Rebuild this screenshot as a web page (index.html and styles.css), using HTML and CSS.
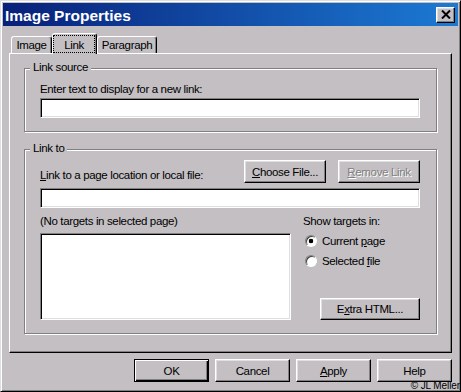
FILE: index.html
```html
<!DOCTYPE html>
<html lang="en">
<head>
    <meta charset="UTF-8">
    <meta name="viewport" content="width=device-width, initial-scale=1.0">
    <title>Image Properties</title>
    <link rel="stylesheet" href="styles.css">
</head>
<body>

<div class="window">
    <div class="titlebar">
        <span class="title">Image Properties</span>
        <button class="close-btn" aria-label="Close">
            <svg width="10" height="9" viewBox="0 0 10 9">
                <path d="M1 0.5 L9 8.5 M9 0.5 L1 8.5" stroke="#000" stroke-width="2" fill="none"/>
            </svg>
        </button>
    </div>

    <div class="content">
        <div class="tabs">
            <div class="tab tab-image">Image</div>
            <div class="tab tab-link active"><span class="focus">Link</span></div>
            <div class="tab tab-para">Paragraph</div>
        </div>

        <div class="panel">
            <div class="group group-source">
                <span class="group-title">Link source</span>
                <div class="label">Enter text to display for a new link:</div>
                <div class="textbox"></div>
            </div>

            <div class="group group-link">
                <span class="group-title">Link to</span>
                <div class="file-row">
                    <div class="label file-label"><u>L</u>ink to a page location or local file:</div>
                    <button class="btn btn-file"><u>C</u>hoose File...</button>
                    <button class="btn btn-file disabled"><u>R</u>emove Link</button>
                </div>
                <div class="textbox textbox-url"></div>

                <div class="targets">
                    <div class="targets-list">
                        <div class="label">(No targets in selected page)</div>
                        <div class="listbox"></div>
                    </div>
                    <div class="targets-opts">
                        <div class="label">Show targets in:</div>
                        <label class="radio-row first"><span class="radio checked"></span><span>Current <u>p</u>age</span></label>
                        <label class="radio-row"><span class="radio"></span><span>Selected <u>f</u>ile</span></label>
                        <button class="btn btn-extra">E<u>x</u>tra HTML...</button>
                    </div>
                </div>
            </div>
        </div>

        <div class="footer">
            <button class="btn btn-footer btn-default">OK</button>
            <button class="btn btn-footer">Cancel</button>
            <button class="btn btn-footer"><u>A</u>pply</button>
            <button class="btn btn-footer">Help</button>
        </div>
    </div>

    <div class="credit">© JL Meller</div>
</div>

</body>
</html>
```

FILE: styles.css
```css
body {
    margin: 0;
    background-color: #c3bfc3;
    color: #000;
    font-family: 'Liberation Sans', Arial, sans-serif;
    font-size: 11.5px;
    letter-spacing: -0.35px;
}
.window {
    position: relative;
    width: 461px;
    height: 392px;
    box-sizing: border-box;
    border: 1px solid;
    border-color: #dfdfdf #000 #000 #dfdfdf;
    box-shadow: inset 1px 1px #fff, inset -1px -1px #808080;
    padding: 2px;
    background-color: #c3bfc3;
}
.titlebar {
    height: 23px;
    display: flex;
    align-items: center;
    justify-content: space-between;
    padding: 0 3px 0 2px;
    background: linear-gradient(to right, #08207a, #1c7ad4);
}
.title {
    color: #fff;
    font-weight: bold;
    font-size: 15.5px;
    letter-spacing: 0;
    padding-top: 2px;
}
.close-btn {
    width: 19px;
    height: 16px;
    padding: 0;
    box-sizing: border-box;
    border: 1px solid;
    border-color: #fff #000 #000 #fff;
    box-shadow: inset -1px -1px #808080, inset 1px 1px #dfdfdf;
    background-color: #c3bfc3;
    display: flex;
    align-items: center;
    justify-content: center;
}
.content {
    padding: 0 6px;
}

/* tabs */
.tabs {
    display: flex;
    align-items: flex-end;
    height: 20px;
    margin-top: 7px;
    padding-left: 2px;
}
.tab {
    box-sizing: border-box;
    height: 17px;
    border: 1px solid;
    border-bottom: none;
    border-color: #fff #000 #000 #fff;
    box-shadow: inset -1px 0 #808080;
    border-radius: 3px 3px 0 0;
    text-align: center;
    line-height: 14px;
    padding-top: 1px;
}
.tab-image { width: 41px; }
.tab-link { width: 45px; }
.tab-para { width: 60px; }
.tab.active {
    height: 21px;
    margin-bottom: -1px;
    padding: 0;
    position: relative;
    z-index: 1;
    background-color: #c3bfc3;
}
.focus {
    display: block;
    box-sizing: border-box;
    height: 18px;
    margin: 1px 1px 0 0;
    padding-top: 2px;
    border: 1px dotted #000;
    line-height: 14px;
}

/* panel and groups */
.panel {
    border: 1px solid;
    border-color: #fff #000 #000 #fff;
    box-shadow: inset -1px -1px #808080;
    padding: 14px 14px 18px 14px;
}
.group {
    position: relative;
    border: 1px solid #808080;
    box-shadow: inset 1px 1px #fff, 1px 1px #fff;
    padding: 13px 16px 13px 15px;
}
.group + .group {
    margin-top: 17px;
}
.group-link {
    padding-top: 10px;
}
.group-title {
    position: absolute;
    top: -9px;
    left: 5px;
    padding: 0 3px;
    line-height: 14px;
    background-color: #c3bfc3;
}
.label {
    line-height: 14px;
}
.group-source .label {
    margin-bottom: 2px;
}
.textbox, .listbox {
    box-sizing: border-box;
    height: 20px;
    background-color: #fff;
    border: 1px solid;
    border-color: #808080 #fff #fff #808080;
    box-shadow: inset 1px 1px #000, inset -1px -1px #dfdfdf;
}
.file-row {
    display: flex;
    gap: 12px;
}
.file-label {
    flex: 1;
    align-self: flex-end;
    margin-bottom: 1px;
}
.textbox-url {
    margin-top: 5px;
}
.targets {
    display: flex;
    gap: 12px;
    margin-top: 6px;
}
.targets-list {
    width: 251px;
}
.listbox {
    height: 87px;
    margin-top: 5px;
}
.targets-opts {
    flex: 1;
    display: flex;
    flex-direction: column;
}
.radio-row {
    display: flex;
    align-items: center;
    height: 20px;
}
.radio-row.first {
    margin-top: 3px;
}
.radio {
    box-sizing: border-box;
    width: 12px;
    height: 12px;
    margin: 0 5px 0 2px;
    border-radius: 50%;
    border: 1px solid;
    border-color: #808080 #fff #fff #808080;
    box-shadow: inset 1px 1px #404040;
    background-color: #fff;
}
.radio.checked {
    background: radial-gradient(circle, #000 0 2px, #fff 2.6px);
}

/* buttons */
.btn {
    box-sizing: border-box;
    height: 23px;
    padding: 0;
    font: inherit;
    letter-spacing: inherit;
    color: #000;
    border: 1px solid;
    border-color: #fff #000 #000 #fff;
    box-shadow: inset -1px -1px #808080, inset 1px 1px #dfdfdf;
    background-color: #c3bfc3;
}
.btn-file {
    width: 82px;
}
.btn.disabled {
    color: #808080;
    text-shadow: 1px 1px #fff;
}
.btn-extra {
    width: 100px;
    height: 22px;
    margin-top: auto;
    align-self: flex-end;
}
.footer {
    display: flex;
    justify-content: flex-end;
    gap: 6px;
    margin-top: 6px;
}
.btn-footer {
    width: 75px;
}
.btn-default {
    border-color: #000;
    box-shadow: inset 1px 1px #fff, inset -1px -1px #000, inset -2px -2px #808080;
}
.credit {
    position: absolute;
    right: 0;
    bottom: 0;
    font-size: 10px;
    line-height: 10px;
    letter-spacing: -0.1px;
}
```
